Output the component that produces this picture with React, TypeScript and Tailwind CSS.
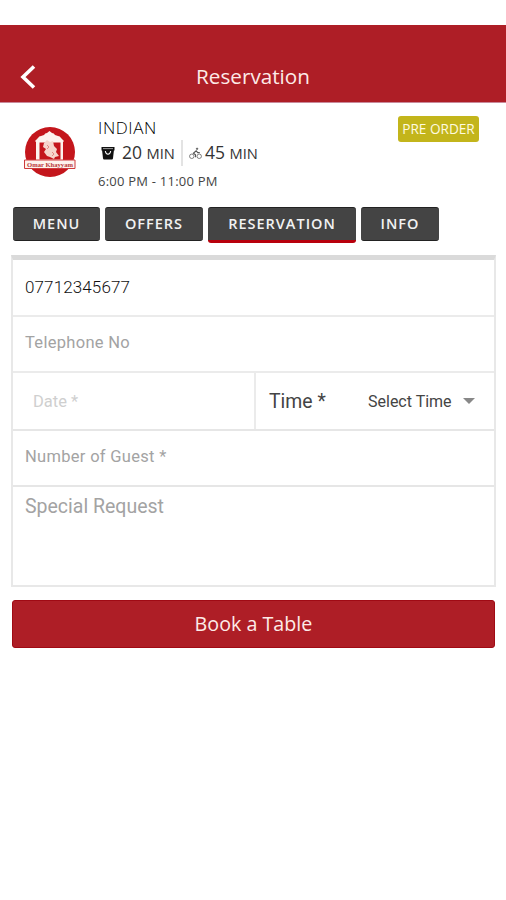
import { useState } from "react";
import clsx from "clsx";

const tabs = [
  { label: "MENU", width: "w-[87px]" },
  { label: "OFFERS", width: "w-[98px]" },
  { label: "RESERVATION", width: "w-[148px]" },
  { label: "INFO", width: "w-[78px]" },
];

function Logo() {
  return (
    <svg viewBox="0 0 52 52" className="h-[52px] w-[52px] overflow-visible">
      <circle cx="26" cy="25" r="25" fill="#c4161c" />
      <path
        d="M12 35V15l-1-1 3-3q1-2 3-2l3-1q1-2 3-2l2.500-2L28 6q2 0 3 2l3 1q2 0 3 2l3 3-1 1v20z"
        fill="#fdf3ee"
      />
      <path d="M15.500 32.500V15.500h21v17z" fill="#c4161c" />
      <path
        d="M20 16l3-3 3 2 3-1 1 5 3 3-1 3 3 4-4 1-1 2-4-2-3-1-3-4 2-3-3-2z"
        fill="#f6d5cc"
      />
      <path d="M23 18l2 2-2 2M28 25l2 2-2 2" stroke="#e08a84" fill="none" />
      <path d="M.5 33h50.500v8.500H.5z" fill="#fdf3ee" stroke="#cf3a3c" strokeWidth="1" />
      <text
        x="26"
        y="39.500"
        textAnchor="middle"
        textLength="46"
        lengthAdjust="spacingAndGlyphs"
        fontFamily="Liberation Serif, serif"
        fontSize="7"
        fontWeight="bold"
        fill="#b8383b"
      >
        Omar Khayyam
      </text>
    </svg>
  );
}

function BagIcon() {
  return (
    <svg viewBox="0 0 14 14" className="h-[14px] w-[14px]">
      <path d="M.5 1h13v3.400h-.6L12 12.200q-.1 1.200-1.100 1.200H3.100q-1 0-1.100-1.200L1.100 4.400H.5z" fill="#111" />
      <path d="M2 2.600h10" stroke="#bbb" strokeWidth=".8" />
      <path d="M4.300 5q.5 3.200 2.700 3.200T9.700 5" stroke="#fff" strokeWidth="1.100" fill="none" />
    </svg>
  );
}

function BikeIcon() {
  return (
    <svg viewBox="0 0 14 14" className="h-[13px] w-[13px]" fill="none" stroke="#555" strokeWidth=".8">
      <circle cx="3" cy="10" r="2.400" />
      <circle cx="11" cy="10" r="2.400" />
      <circle cx="8.700" cy="1.900" r=".8" fill="#555" />
      <path d="M7 11V8.500L4.700 6.700l3-2.700 1.700 2h2.200" strokeWidth="1.200" />
    </svg>
  );
}

export default function App() {
  const [activeTab, setActiveTab] = useState("RESERVATION");

  return (
    <div className="h-[900px] w-[506px] overflow-hidden bg-white pt-[25px] font-['Open_Sans',sans-serif]">
      <header className="grid h-[78px] grid-cols-[60px_1fr_60px] border-b border-[#c98a9b] bg-[#ae1e26] pt-[27px] text-white">
        <button className="flex h-[49px] items-center pl-5">
          <svg viewBox="0 0 16 24" className="h-6 w-4" fill="none" stroke="white" strokeWidth="3.600">
            <path d="M14 1.500L3 12l11 10.500" />
          </svg>
        </button>
        <h1 className="text-center text-[20.700px] leading-[49px] text-[#fdebe8]">Reservation</h1>
      </header>

      <section className="flex h-[104px] pl-6 pr-[27px] text-[#333]">
        <div className="w-[74px] pt-6">
          <Logo />
        </div>
        <div className="flex-1 pt-[13px]">
          <h2 className="text-[17px] leading-6 font-light tracking-[0.600px] text-black">INDIAN</h2>
          <div className="flex h-[26px] items-center leading-[24px]">
            <span className="ml-[3px]">
              <BagIcon />
            </span>
            <span className="-mt-[2px] ml-[7px] text-[17.500px]">
              20 <span className="text-[14.700px]">MIN</span>
            </span>
            <span className="mr-[6px] ml-[6px] h-[26px] w-[2px] bg-[#e3e3e3]" />
            <BikeIcon />
            <span className="-mt-[2px] ml-[3px] text-[17.500px]">
              45 <span className="text-[14.700px]">MIN</span>
            </span>
          </div>
          <p className="mt-[5px] text-[13px] leading-5 tracking-[0.230px] text-[#444]">6:00 PM - 11:00 PM</p>
        </div>
        <span className="mt-[13px] h-[26px] w-[81px] rounded-[3px] bg-[#c3b51b] text-center text-[13.600px] leading-[26px] text-[#fffbe0]">
          PRE ORDER
        </span>
      </section>

      <nav className="flex h-[48px] items-start gap-[5px] pl-[13px]">
        {tabs.map((tab) => (
          <button
            key={tab.label}
            onClick={() => setActiveTab(tab.label)}
            className={clsx(
              "rounded-[3px] border-t border-t-[#222] bg-[#444] text-center text-[14.500px] leading-[32px] font-semibold tracking-[1px] text-[#f2f2f2]",
              tab.width,
              activeTab === tab.label ? "border-b-[3px] border-b-[#b8000c]" : "border-b border-b-[#222]"
            )}
          >
            {tab.label}
          </button>
        ))}
      </nav>

      <form className="mr-[10px] ml-[11px] h-[332px] border-x-2 border-t-[5px] border-b-2 border-[#e8e8e8] border-t-[#dadada] font-[Roboto,sans-serif] text-[16.500px] text-[#a3a3a3]">
        <div className="h-[57px] border-b-2 border-[#ebebeb] pl-3 text-[17px] leading-[54px] font-light tracking-[0.120px] text-[#111]">
          07712345677
        </div>
        <div className="h-[56px] border-b-2 border-[#ebebeb] pl-3 leading-[52px] tracking-[0.300px]">Telephone No</div>
        <div className="flex h-[58px] border-b-2 border-[#e6e6e6] leading-[57px]">
          <div className="w-[243px] border-r-2 border-[#ebebeb] pl-5 text-[#cfcfcf]">Date *</div>
          <div className="flex flex-1 items-center pl-[13px] text-[#444]">
            <span className="w-[99px] text-[19.400px]">Time *</span>
            <span className="text-[16px]">Select Time</span>
            <span className="ml-[11px] border-x-[6px] border-t-[6px] border-x-transparent border-t-[#888]" />
          </div>
        </div>
        <div className="h-[56px] border-b-2 border-[#e6e6e6] pl-3 leading-[51px] tracking-[0.300px]">Number of Guest *</div>
        <div className="pl-3 text-[19.500px] leading-[40px]">Special Request</div>
      </form>

      <button className="mt-[13px] ml-[12px] block h-[48px] w-[483px] rounded-[3px] border border-[#a00a14] bg-[#ae1e26] text-[19.700px] leading-[46px] text-[#fdebe8]">
        Book a Table
      </button>
    </div>
  );
}
